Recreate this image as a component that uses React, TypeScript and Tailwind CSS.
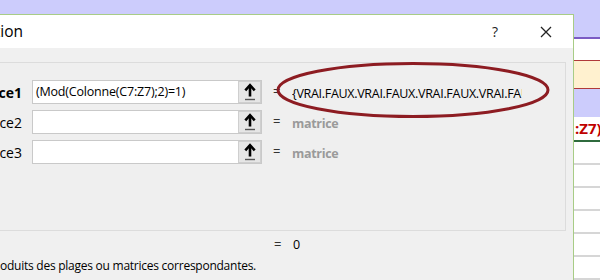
import React from 'react';

const font = { fontFamily: '"Open Sans", "Noto Sans", sans-serif' };

const ArrowButton: React.FC = () => (
  <div className="w-[23px] h-[22px] bg-[#e6e6e6] border border-[#cfcfcf] flex items-center justify-center">
    <svg width="14" height="18" viewBox="0 0 14 18">
      <path d="M7 2.5 L7 13.5" stroke="#000" strokeWidth="2.6" fill="none" />
      <path d="M2.3 7.3 L7 2.2 L11.7 7.3" stroke="#000" strokeWidth="2.6" fill="none" strokeLinejoin="miter" />
      <path d="M2 16.5 L12 16.5" stroke="#555" strokeWidth="1.4" />
    </svg>
  </div>
);

interface ArgRowProps {
  label: string;
  bold?: boolean;
  value?: string;
  result: string;
  resultMuted?: boolean;
}

const ArgRow: React.FC<ArgRowProps> = ({ label, bold, value, result, resultMuted }) => (
  <div className="flex items-center h-[24px]">
    <div className="w-[24px] overflow-hidden flex justify-end shrink-0">
      <span className={`whitespace-nowrap text-[14px] text-black pr-[2px] ${bold ? 'font-bold' : ''}`}>{label}</span>
    </div>
    <div className="ml-[8px] w-[230px] h-[24px] bg-white border border-[#c9c9c9] flex items-center justify-between">
      <span className="pl-[3px] text-[12.5px] tracking-[-0.2px] text-black whitespace-nowrap">{value}</span>
      <ArrowButton />
    </div>
    <span className="ml-[11px] w-[19px] text-[13px] text-[#333]">=</span>
    <div className="w-[230px] overflow-hidden">
      <span
        className={`whitespace-nowrap text-[12.5px] tracking-[-0.3px] ${resultMuted ? 'text-[#9a9a9a] font-bold' : 'text-black'}`}
      >
        {result}
      </span>
    </div>
  </div>
);

export default function App() {
  const cells = [0, 1, 2, 3, 4, 5];
  return (
    <div className="relative w-[600px] h-[280px] overflow-hidden bg-white" style={font}>
      {/* spreadsheet behind the dialog */}
      <div className="flex flex-col w-full">
        <div className="h-[37px] bg-[#ccccfc]" />
        <div className="h-[2px] bg-[#7b5cc4]" />
        <div className="h-[21px] bg-white" />
        <div className="h-[1px] bg-[#b03a3a]" />
        <div className="h-[27px] bg-[#fff1cf]" />
        <div className="h-[1px] bg-[#b03a3a]" />
        <div className="h-[28px] bg-[#ccccfc]" />
        <div className="h-[23px] bg-white flex items-center pl-[575px]">
          <span className="text-[15px] font-bold text-[#c00000] whitespace-nowrap">:Z7)</span>
        </div>
        <div className="h-[2px] bg-[#2f6b3e]" />
        {cells.map((c) => (
          <div key={c} className="h-[23px] bg-white border-b-2 border-[#d6d6d6]" />
        ))}
      </div>

      {/* dialog */}
      <div className="absolute left-0 top-[14px] w-[574px] h-[280px] border-t border-r border-[#a8cc86] bg-[#f0f0f0] flex flex-col">
        <div className="h-[33px] bg-white flex items-center">
          <div className="w-[23px] overflow-hidden flex justify-end shrink-0">
            <span className="whitespace-nowrap text-[15.5px] text-black">Arguments de la fonction</span>
          </div>
          <div className="flex-1" />
          <span className="text-[14px] text-[#222] mr-[42px]">?</span>
          <svg width="12" height="12" viewBox="0 0 12 12" className="mr-[21px]">
            <path d="M1 1 L11 11 M11 1 L1 11" stroke="#222" strokeWidth="1.3" />
          </svg>
        </div>
        <div className="h-[14px]" />
        <div className="w-[566px] h-[169px] border-t border-r border-b border-[#dcdcdc] bg-[#efefef] flex flex-col gap-[6px] pt-[17px]">
          <ArgRow label="Matrice1" bold value="(Mod(Colonne(C7:Z7);2)=1)" result="{VRAI.FAUX.VRAI.FAUX.VRAI.FAUX.VRAI.FAUX.VRAI.FAUX}" />
          <ArgRow label="Matrice2" result="matrice" resultMuted />
          <ArgRow label="Matrice3" result="matrice" resultMuted />
        </div>
        <div className="flex items-center h-[20px] mt-[4px] pl-[274px]">
          <span className="w-[19px] text-[13px] text-[#333]">=</span>
          <span className="text-[12.5px] text-black">0</span>
        </div>
        <div className="h-[22px] flex items-center">
          <span className="text-[12px] tracking-[-0.25px] text-black whitespace-nowrap">oduits des plages ou matrices correspondantes.</span>
        </div>
      </div>

      {/* hand-drawn highlight */}
      <svg className="absolute left-0 top-0 pointer-events-none" width="600" height="280">
        <ellipse cx="413" cy="90" rx="135" ry="26.5" fill="none" stroke="#8d1c22" strokeWidth="3" />
      </svg>
    </div>
  );
}
